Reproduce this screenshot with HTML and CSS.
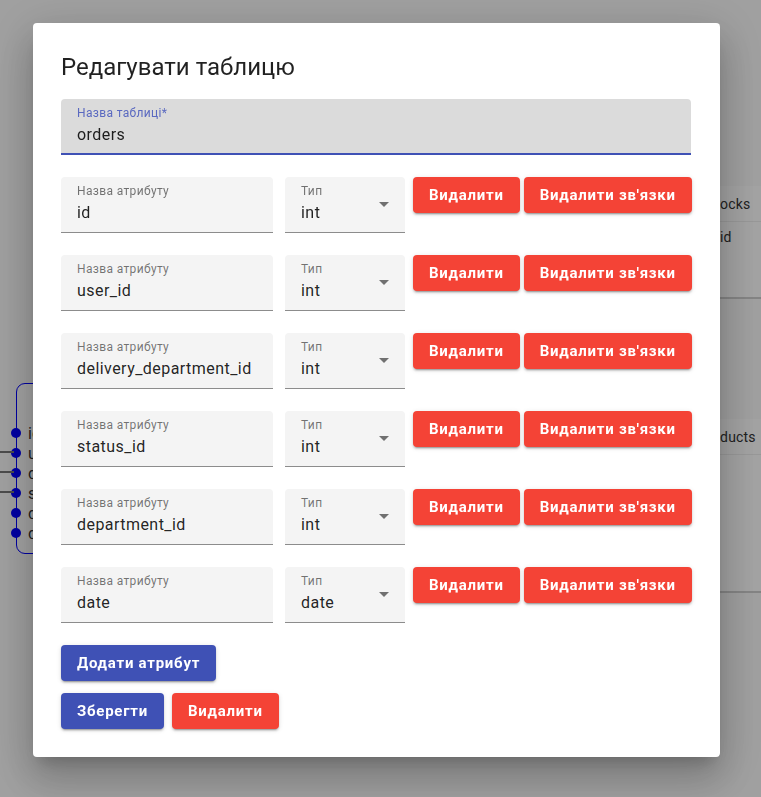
FILE: index.html
```html
<!DOCTYPE html>
<html lang="uk">
<head>
<meta charset="utf-8">
<title>Редагувати таблицю</title>
<link rel="stylesheet" href="styles.css">
</head>
<body>
<div class="canvas">
  <div class="node node-left">
    <div class="port-row"><span class="dot"></span><span class="attr">id</span></div>
    <div class="port-row"><span class="dot"></span><span class="attr">user_id</span></div>
    <div class="port-row"><span class="dot"></span><span class="attr">delivery</span></div>
    <div class="port-row"><span class="dot"></span><span class="attr">status_id</span></div>
    <div class="port-row"><span class="dot"></span><span class="attr">department_id</span></div>
    <div class="port-row"><span class="dot"></span><span class="attr">date</span></div>
  </div>
  <div class="link link-1"></div>
  <div class="link link-2"></div>
  <div class="link link-3"></div>

  <div class="card card-stocks">
    <div class="card-head">stocks</div>
    <div class="card-row">id</div>
  </div>
  <div class="card card-products">
    <div class="card-head">products</div>
  </div>
</div>

<div class="backdrop">
  <div class="dialog">
    <h2 class="title">Редагувати таблицю</h2>

    <div class="field field-focused">
      <span class="label label-focused">Назва таблиці*</span>
      <span class="value">orders</span>
    </div>

    <div class="attr-list">
      <div class="attr-row">
        <div class="field field-name"><span class="label">Назва атрибуту</span><span class="value">id</span></div>
        <div class="field field-type"><span class="label">Тип</span><span class="value">int</span><svg class="arrow" viewBox="0 0 24 24"><path d="M7 10l5 5 5-5z"/></svg></div>
        <button class="btn btn-red">Видалити</button>
        <button class="btn btn-red">Видалити зв'язки</button>
      </div>
      <div class="attr-row">
        <div class="field field-name"><span class="label">Назва атрибуту</span><span class="value">user_id</span></div>
        <div class="field field-type"><span class="label">Тип</span><span class="value">int</span><svg class="arrow" viewBox="0 0 24 24"><path d="M7 10l5 5 5-5z"/></svg></div>
        <button class="btn btn-red">Видалити</button>
        <button class="btn btn-red">Видалити зв'язки</button>
      </div>
      <div class="attr-row">
        <div class="field field-name"><span class="label">Назва атрибуту</span><span class="value">delivery_department_id</span></div>
        <div class="field field-type"><span class="label">Тип</span><span class="value">int</span><svg class="arrow" viewBox="0 0 24 24"><path d="M7 10l5 5 5-5z"/></svg></div>
        <button class="btn btn-red">Видалити</button>
        <button class="btn btn-red">Видалити зв'язки</button>
      </div>
      <div class="attr-row">
        <div class="field field-name"><span class="label">Назва атрибуту</span><span class="value">status_id</span></div>
        <div class="field field-type"><span class="label">Тип</span><span class="value">int</span><svg class="arrow" viewBox="0 0 24 24"><path d="M7 10l5 5 5-5z"/></svg></div>
        <button class="btn btn-red">Видалити</button>
        <button class="btn btn-red">Видалити зв'язки</button>
      </div>
      <div class="attr-row">
        <div class="field field-name"><span class="label">Назва атрибуту</span><span class="value">department_id</span></div>
        <div class="field field-type"><span class="label">Тип</span><span class="value">int</span><svg class="arrow" viewBox="0 0 24 24"><path d="M7 10l5 5 5-5z"/></svg></div>
        <button class="btn btn-red">Видалити</button>
        <button class="btn btn-red">Видалити зв'язки</button>
      </div>
      <div class="attr-row">
        <div class="field field-name"><span class="label">Назва атрибуту</span><span class="value">date</span></div>
        <div class="field field-type"><span class="label">Тип</span><span class="value">date</span><svg class="arrow" viewBox="0 0 24 24"><path d="M7 10l5 5 5-5z"/></svg></div>
        <button class="btn btn-red">Видалити</button>
        <button class="btn btn-red">Видалити зв'язки</button>
      </div>
    </div>

    <div class="add-row">
      <button class="btn btn-blue">Додати атрибут</button>
    </div>
    <div class="actions">
      <button class="btn btn-blue">Зберегти</button>
      <button class="btn btn-red">Видалити</button>
    </div>
  </div>
</div>
</body>
</html>
```

FILE: styles.css
```css
* { box-sizing: border-box; }

html, body {
  margin: 0;
  padding: 0;
  width: 761px;
  height: 797px;
  overflow: hidden;
  font-family: Roboto, "Noto Sans", Arial, sans-serif;
}

body { background: #fafafa; }

/* background diagram canvas */
.canvas {
  position: relative;
  width: 761px;
  height: 797px;
  overflow: hidden;
}

.node-left {
  position: absolute;
  left: 16px;
  top: 383px;
  width: 200px;
  height: 171px;
  border: 1px solid #0000ff;
  border-radius: 9px;
  background: #fff;
  padding-top: 39px;
}

.port-row {
  position: relative;
  height: 20px;
  display: flex;
  align-items: center;
}

.dot {
  position: absolute;
  left: -6px;
  top: 5px;
  width: 10px;
  height: 10px;
  border-radius: 50%;
  background: #0000ff;
}

.attr {
  margin-left: 11px;
  font-size: 16px;
  color: #333;
}

.link {
  position: absolute;
  left: 0;
  width: 14px;
  height: 2px;
  background: #777;
}
.link-1 { top: 451px; }
.link-2 { top: 471px; }
.link-3 { top: 491px; }

.card {
  position: absolute;
  left: 690px;
  width: 200px;
  background: #fff;
  border-bottom: 2px solid #cfcfcf;
}

.card-stocks { top: 186px; height: 113px; }
.card-products { top: 419px; height: 174px; }

.card-head {
  height: 36px;
  padding-left: 18px;
  display: flex;
  align-items: center;
  font-size: 14px;
  letter-spacing: 0.2px;
  color: #333;
  border-bottom: 1px solid #eee;
}
.card-products .card-head { padding-left: 9px; }

.card-row {
  height: 30px;
  padding-left: 30px;
  display: flex;
  align-items: center;
  font-size: 14px;
  color: #333;
}

/* modal */
.backdrop {
  position: fixed;
  inset: 0;
  background: rgba(0, 0, 0, 0.36);
  padding: 23px 0 0 33px;
}

.dialog {
  width: 687px;
  background: #fff;
  border-radius: 4px;
  padding: 28px 29px 28px 28px;
  box-shadow: 0 11px 15px -7px rgba(0,0,0,0.2), 0 24px 38px 3px rgba(0,0,0,0.14), 0 9px 46px 8px rgba(0,0,0,0.12);
}

.title {
  margin: 0 0 16px;
  font-size: 24px;
  line-height: 32px;
  font-weight: 400;
  color: rgba(0,0,0,0.87);
}

.field {
  position: relative;
  flex-shrink: 0;
  height: 56px;
  background: #f4f4f4;
  border-radius: 4px 4px 0 0;
  border-bottom: 1px solid #8c8c8c;
  padding: 7px 16px 0;
  display: flex;
  flex-direction: column;
}

.field-focused {
  background: #dbdbdb;
  border-bottom: 2px solid #3f51b5;
}

.label {
  font-size: 12px;
  line-height: 14px;
  letter-spacing: 0.35px;
  color: rgba(0,0,0,0.54);
  white-space: nowrap;
}

.label-focused { color: #5a69c0; }

.value {
  margin-top: 5px;
  font-size: 16px;
  line-height: 19px;
  letter-spacing: 0.45px;
  color: rgba(0,0,0,0.87);
  white-space: nowrap;
}

.attr-list {
  margin-top: 22px;
  display: flex;
  flex-direction: column;
  gap: 22px;
}

.attr-row {
  display: flex;
  align-items: flex-start;
}

.field-name { width: 212px; margin-right: 12px; }
.field-type { width: 120px; margin-right: 8px; }

.arrow {
  position: absolute;
  right: 9px;
  top: 15px;
  width: 24px;
  height: 24px;
  fill: rgba(0,0,0,0.54);
}

.btn {
  flex-shrink: 0;
  height: 36px;
  padding: 0 16px;
  border: 0;
  border-radius: 4px;
  font-family: Roboto, "Noto Sans", Arial, sans-serif;
  font-size: 15px;
  font-weight: 700;
  letter-spacing: 0.75px;
  color: #fff;
  display: inline-flex;
  align-items: center;
  justify-content: center;
  box-shadow: 0 3px 1px -2px rgba(0,0,0,0.2), 0 2px 2px 0 rgba(0,0,0,0.14), 0 1px 5px 0 rgba(0,0,0,0.12);
  white-space: nowrap;
}

.btn + .btn { margin-left: 4px; }

.btn-red { background: #f44336; }
.btn-blue { background: #3f51b5; }

.add-row {
  margin-top: 22px;
  display: flex;
}

.actions {
  margin-top: 12px;
  display: flex;
}

.actions .btn + .btn { margin-left: 8px; }
```
